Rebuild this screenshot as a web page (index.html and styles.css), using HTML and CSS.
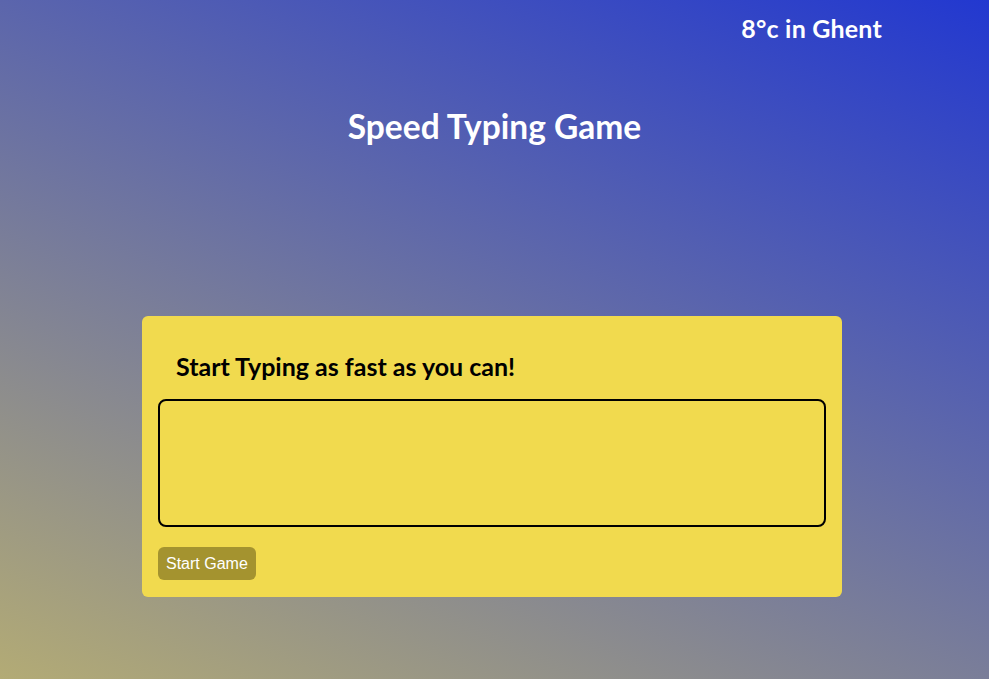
FILE: index.html
```html
<!DOCTYPE html>
<html>
<head>
<meta charset="utf-8">
<link rel="stylesheet" href="styles.css">
</head>
<body>
<div class="page">
  <header class="top">
    <div class="weather">8°c in Ghent</div>
  </header>
  <h1 class="title">Speed Typing Game</h1>
  <main class="card">
    <h2 class="prompt">Start Typing as fast as you can!</h2>
    <textarea class="input"></textarea>
    <div class="actions"><button class="start">Start Game</button></div>
  </main>
</div>
</body>
</html>
```
FILE: styles.css
```css
html, body { margin: 0; padding: 0; }
body {
  min-height: 100vh;
  background: linear-gradient(24deg, #b3ab75 0%, #2238d0 100%);
  font-family: "Lato", "Open Sans", sans-serif;
}
.page { display: flex; flex-direction: column; }
.top { display: flex; justify-content: flex-end; padding: 13px 107px 0 0; }
.weather { color: #fff; font-weight: 700; font-size: 25px; line-height: 30px; letter-spacing: 0.2px; }
.title {
  margin: 63px 0 0;
  text-align: center;
  color: #fff;
  font-size: 33.5px;
  font-weight: 700;
  line-height: 40px;
}
.card {
  margin: 170px 0 0 142px;
  width: 700px;
  box-sizing: border-box;
  background: #f1da4e;
  border-radius: 6px;
  padding: 32px 16px 17px;
  display: flex;
  flex-direction: column;
}
.prompt {
  margin: 0 0 15px 18px;
  font-size: 25px;
  font-weight: 700;
  line-height: 36px;
  color: #000;
}
.input {
  box-sizing: border-box;
  height: 128px;
  width: 100%;
  border: 2px solid #000;
  border-radius: 8px;
  background: transparent;
  resize: none;
  margin: 0;
}
.actions { display: flex; margin-top: 20px; }
.start {
  background: #a4932f;
  color: #fff;
  border: none;
  border-radius: 6px;
  font-family: "Liberation Sans", Arial, sans-serif;
  font-size: 16px;
  height: 33px;
  padding: 0 8px;
}
```
